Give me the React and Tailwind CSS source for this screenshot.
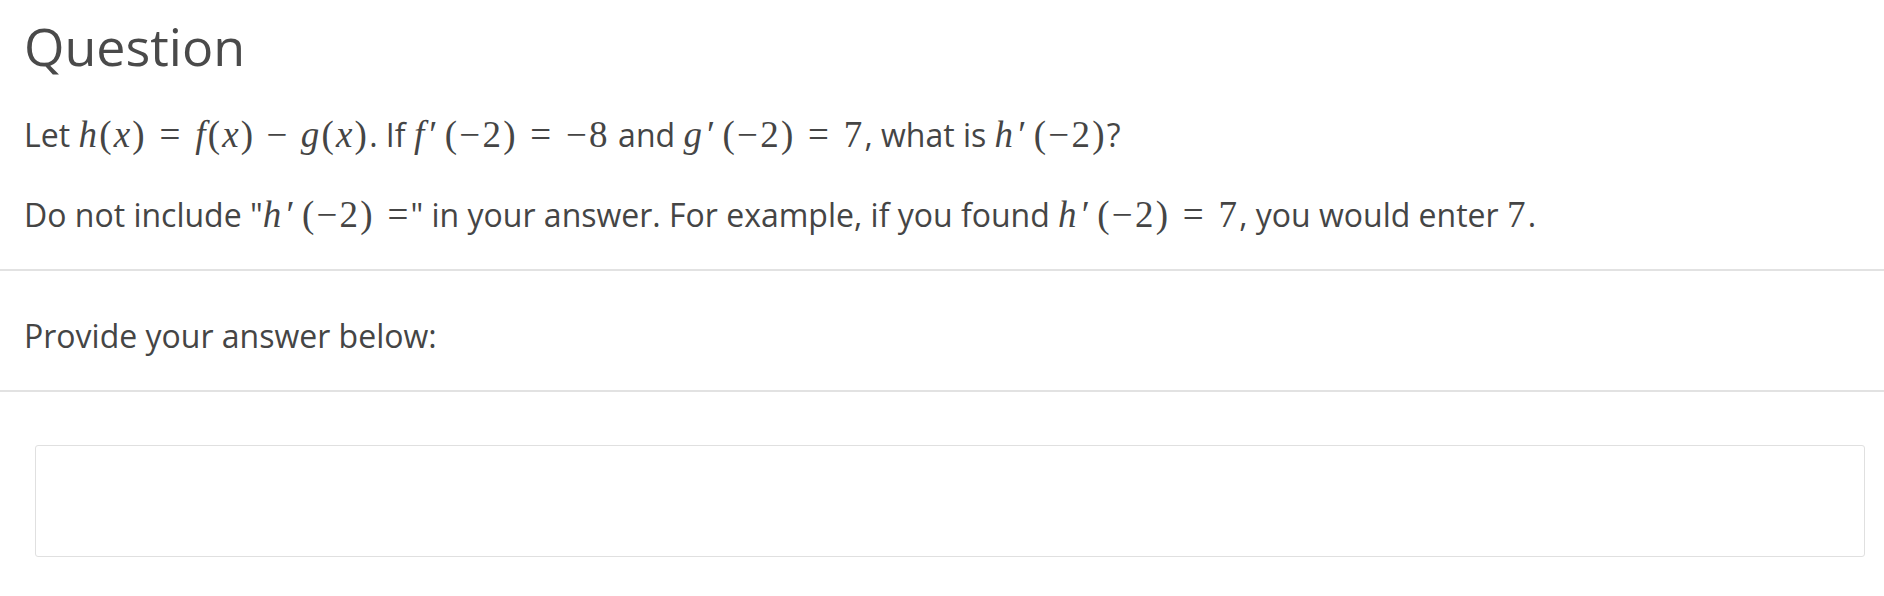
import React from "react";

const M = ({ children }) => (
  <span className="font-['Liberation_Serif',serif] text-[37px] leading-none not-italic tracking-[0.06em]">{children}</span>
);
const I = ({ children }) => <span className="italic">{children}</span>;
const Rel = ({ children }) => <span className="mx-[0.34em]">{children}</span>;
const RelEnd = ({ children }) => <span className="ml-[0.34em]">{children}</span>;
const Bin = ({ children }) => <span className="mx-[0.3em]">{children}</span>;
const P = () => <span className="ml-[0.08em] mr-[0.14em]">′</span>;

export default function App() {
  return (
    <div className="min-h-[596px] w-[1884px] bg-white text-[#454545] font-['Open_Sans','Noto_Sans',sans-serif]">
      <div className="pl-6 pt-4">
        <h1 className="text-[52px] leading-[60px] font-normal text-[#4a4a4a]">Question</h1>
        <p className="mt-[39px] text-[32px] leading-[40px] whitespace-nowrap">
          Let <M><I>h</I>(<I>x</I>)<Rel>=</Rel><I>f</I>(<I>x</I>)<Bin>−</Bin><I>g</I>(<I>x</I>)</M>. If <M><I>f</I><P />(−2)<Rel>=</Rel>−8</M> and <M><I>g</I><P />(−2)<Rel>=</Rel>7</M>, what is <M><I>h</I><P />(−2)</M>?
        </p>
        <p className="mt-10 text-[32px] leading-[40px] whitespace-nowrap">
          Do not include "<M><I>h</I><P />(−2)<RelEnd>=</RelEnd></M>" in your answer. For example, if you found <M><I>h</I><P />(−2)<Rel>=</Rel>7</M>, you would enter <M>7</M>.
        </p>
      </div>
      <div className="mt-[34px] h-[2px] bg-[#e2e2e2]" />
      <div className="pl-6 pt-[45px] pb-[34px]">
        <p className="text-[32px] leading-[40px]">Provide your answer below:</p>
      </div>
      <div className="h-[2px] bg-[#e2e2e2]" />
      <div className="ml-[35px] mr-[19px] mt-[53px] h-[112px] rounded-[3px] border border-[#e0e0e0] bg-white" />
    </div>
  );
}
